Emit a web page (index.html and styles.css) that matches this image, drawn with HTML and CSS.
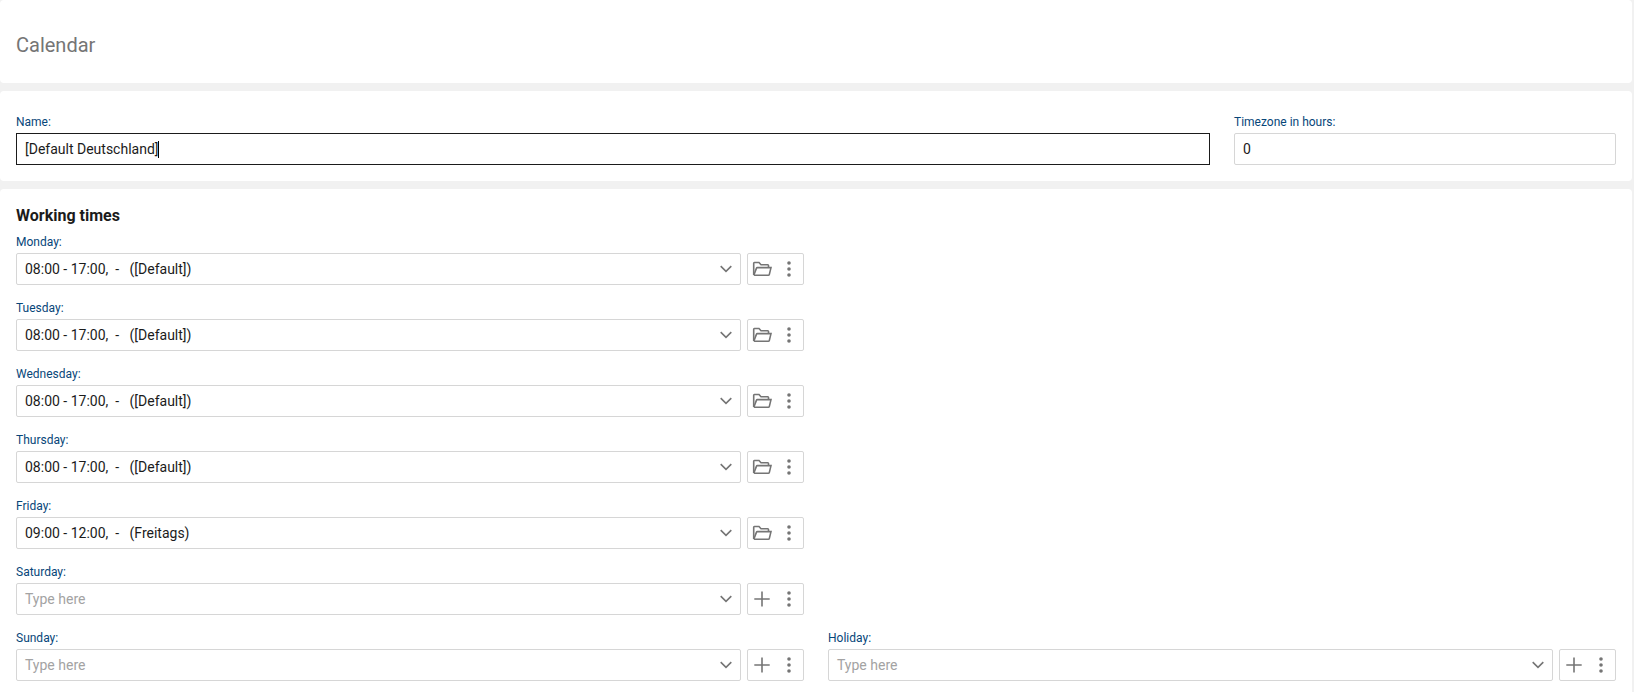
FILE: index.html
```
<!DOCTYPE html>
<html lang="en">

<head>
    <meta charset="UTF-8">
    <meta name="viewport" content="width=device-width, initial-scale=1.0">
    <title>Calendar</title>
    <link rel="stylesheet" href="styles.css">
</head>

<body>
    <!-- Shared icons -->
    <svg class="icon-defs" width="0" height="0">
        <symbol id="icon-chevron" viewBox="0 0 12 8">
            <path d="M0.7 1.2 L6 6.3 L11.3 1.2" />
        </symbol>
        <symbol id="icon-folder" viewBox="0 0 20 16">
            <path d="M1.7 14 V2.2 Q1.7 1.5 2.4 1.5 H7 L9 3.7 H15.8 Q16.5 3.7 16.5 4.4 V6.5" />
            <path d="M1.8 14.2 L4.4 7.4 Q4.7 6.6 5.4 6.6 H19 L17.3 13.6 Q17.1 14.3 16.3 14.3 H1.9" />
        </symbol>
        <symbol id="icon-plus" viewBox="0 0 16 16">
            <path d="M8 0.5 V15.5 M0.3 8 H15.7" />
        </symbol>
        <symbol id="icon-dots" viewBox="0 0 4 16">
            <circle cx="2" cy="2" r="1.8" />
            <circle cx="2" cy="8" r="1.8" />
            <circle cx="2" cy="14" r="1.8" />
        </symbol>
    </svg>

    <header class="panel page-header">
        <h1>Calendar</h1>
    </header>

    <section class="panel general">
        <div class="grid">
            <div class="field wide">
                <div class="label">Name:</div>
                <div class="input focused">[Default Deutschland]<span class="caret"></span></div>
            </div>
            <div class="field">
                <div class="label">Timezone in hours:</div>
                <div class="input">0</div>
            </div>
        </div>
    </section>

    <section class="panel working-times">
        <h2>Working times</h2>
        <div class="grid">
            <div class="field day">
                <div class="label">Monday:</div>
                <div class="control">
                    <div class="input select">08:00 - 17:00,  -   ([Default])<svg class="chevron"><use href="#icon-chevron" /></svg></div>
                    <div class="actions"><svg class="folder"><use href="#icon-folder" /></svg><svg class="dots"><use href="#icon-dots" /></svg></div>
                </div>
            </div>
            <div class="field day">
                <div class="label">Tuesday:</div>
                <div class="control">
                    <div class="input select">08:00 - 17:00,  -   ([Default])<svg class="chevron"><use href="#icon-chevron" /></svg></div>
                    <div class="actions"><svg class="folder"><use href="#icon-folder" /></svg><svg class="dots"><use href="#icon-dots" /></svg></div>
                </div>
            </div>
            <div class="field day">
                <div class="label">Wednesday:</div>
                <div class="control">
                    <div class="input select">08:00 - 17:00,  -   ([Default])<svg class="chevron"><use href="#icon-chevron" /></svg></div>
                    <div class="actions"><svg class="folder"><use href="#icon-folder" /></svg><svg class="dots"><use href="#icon-dots" /></svg></div>
                </div>
            </div>
            <div class="field day">
                <div class="label">Thursday:</div>
                <div class="control">
                    <div class="input select">08:00 - 17:00,  -   ([Default])<svg class="chevron"><use href="#icon-chevron" /></svg></div>
                    <div class="actions"><svg class="folder"><use href="#icon-folder" /></svg><svg class="dots"><use href="#icon-dots" /></svg></div>
                </div>
            </div>
            <div class="field day">
                <div class="label">Friday:</div>
                <div class="control">
                    <div class="input select">09:00 - 12:00,  -   (Freitags)<svg class="chevron"><use href="#icon-chevron" /></svg></div>
                    <div class="actions"><svg class="folder"><use href="#icon-folder" /></svg><svg class="dots"><use href="#icon-dots" /></svg></div>
                </div>
            </div>
            <div class="field day">
                <div class="label">Saturday:</div>
                <div class="control">
                    <div class="input select empty">Type here<svg class="chevron"><use href="#icon-chevron" /></svg></div>
                    <div class="actions"><svg class="plus"><use href="#icon-plus" /></svg><svg class="dots"><use href="#icon-dots" /></svg></div>
                </div>
            </div>
            <div class="field day">
                <div class="label">Sunday:</div>
                <div class="control">
                    <div class="input select empty">Type here<svg class="chevron"><use href="#icon-chevron" /></svg></div>
                    <div class="actions"><svg class="plus"><use href="#icon-plus" /></svg><svg class="dots"><use href="#icon-dots" /></svg></div>
                </div>
            </div>
            <div class="field holiday">
                <div class="label">Holiday:</div>
                <div class="control">
                    <div class="input select empty">Type here<svg class="chevron"><use href="#icon-chevron" /></svg></div>
                    <div class="actions"><svg class="plus"><use href="#icon-plus" /></svg><svg class="dots"><use href="#icon-dots" /></svg></div>
                </div>
            </div>
        </div>
    </section>
</body>

</html>
```
FILE: styles.css
```
* {
    box-sizing: border-box;
}

body {
    font-family: Roboto, 'Liberation Sans', sans-serif;
    font-size: 14px;
    background-color: #f1f1f1;
    color: #1b1b1b;
    margin: 0;
    padding-right: 2px;
    height: 100vh;
    display: flex;
    flex-direction: column;
    gap: 8px;
    overflow: hidden;
}

.icon-defs {
    position: absolute;
}

.panel {
    flex-shrink: 0;
    background-color: #fff;
    border-radius: 4px;
    padding: 16px;
}

.page-header {
    height: 83px;
    padding-top: 33px;
}

h1 {
    margin: 0;
    font-size: 20px;
    line-height: 24px;
    font-weight: 400;
    color: #757575;
}

.general {
    padding-top: 24px;
}

.working-times {
    padding-top: 17px;
}

h2 {
    margin: 0 0 9px;
    font-size: 16px;
    line-height: 20px;
    font-weight: 700;
}

.grid {
    display: grid;
    grid-template-columns: repeat(4, 1fr);
    gap: 16px 24px;
}

.wide {
    grid-column: span 3;
}

.day {
    grid-column: 1 / span 2;
}

.holiday {
    grid-column: 3 / span 2;
}

.label {
    font-size: 12px;
    line-height: 14px;
    margin-bottom: 4px;
    color: #074679;
}

.control {
    display: flex;
    gap: 6px;
}

.input {
    display: flex;
    align-items: center;
    height: 32px;
    padding: 0 8px;
    border: 1px solid #d6d6d6;
    border-radius: 2px;
    white-space: pre;
}

.focused {
    border-color: #1b1b1b;
    border-radius: 0;
}

.caret {
    width: 1px;
    height: 17px;
    margin-left: -1px;
    background-color: #000;
}

.select {
    flex: 1;
    justify-content: space-between;
}

.empty {
    color: #a3a3a3;
}

.actions {
    display: flex;
    align-items: center;
    justify-content: space-between;
    width: 57px;
    height: 32px;
    padding: 0 12px 0 4px;
    border: 1px solid #d6d6d6;
    border-radius: 2px;
}

svg {
    fill: none;
    stroke: #757575;
    stroke-width: 1.6;
}

.chevron {
    width: 12px;
    height: 8px;
}

.folder {
    width: 20px;
    height: 16px;
}

.plus {
    width: 16px;
    height: 16px;
    margin-left: 2px;
}

.dots {
    width: 4px;
    height: 16px;
    fill: #757575;
    stroke: none;
}
```
